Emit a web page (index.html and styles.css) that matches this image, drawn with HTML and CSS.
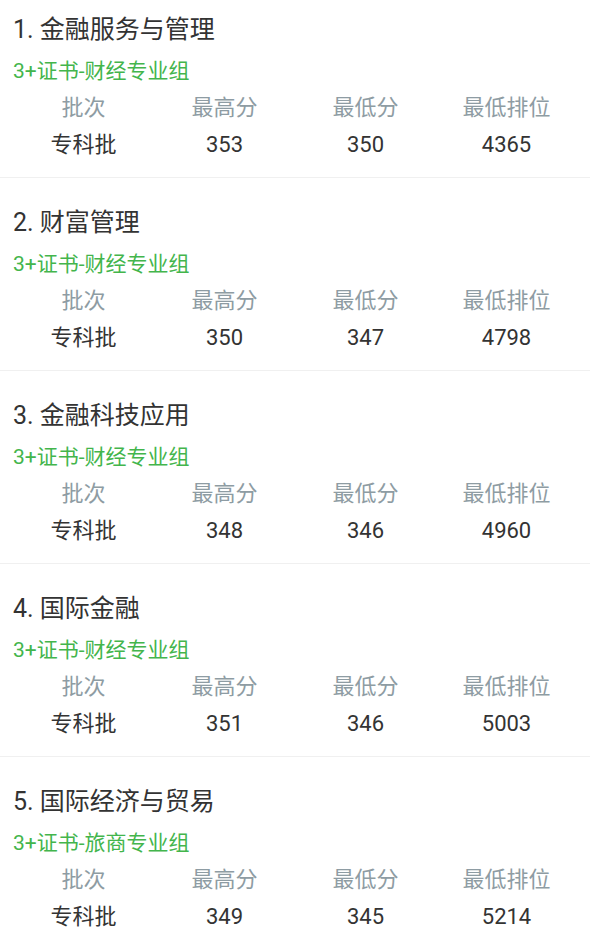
FILE: index.html
```html
<!DOCTYPE html>
<html lang="zh-CN">
<head>
<meta charset="utf-8">
<title>专业分数</title>
<link rel="stylesheet" href="styles.css">
</head>
<body>
<div class="list">
  <div class="item">
    <div class="title">1. 金融服务与管理</div>
    <div class="group">3+证书-财经专业组</div>
    <div class="table">
      <div class="th">批次</div><div class="th">最高分</div><div class="th">最低分</div><div class="th">最低排位</div>
      <div class="td">专科批</div><div class="td">353</div><div class="td">350</div><div class="td">4365</div>
    </div>
  </div>
  <div class="item">
    <div class="title">2. 财富管理</div>
    <div class="group">3+证书-财经专业组</div>
    <div class="table">
      <div class="th">批次</div><div class="th">最高分</div><div class="th">最低分</div><div class="th">最低排位</div>
      <div class="td">专科批</div><div class="td">350</div><div class="td">347</div><div class="td">4798</div>
    </div>
  </div>
  <div class="item">
    <div class="title">3. 金融科技应用</div>
    <div class="group">3+证书-财经专业组</div>
    <div class="table">
      <div class="th">批次</div><div class="th">最高分</div><div class="th">最低分</div><div class="th">最低排位</div>
      <div class="td">专科批</div><div class="td">348</div><div class="td">346</div><div class="td">4960</div>
    </div>
  </div>
  <div class="item">
    <div class="title">4. 国际金融</div>
    <div class="group">3+证书-财经专业组</div>
    <div class="table">
      <div class="th">批次</div><div class="th">最高分</div><div class="th">最低分</div><div class="th">最低排位</div>
      <div class="td">专科批</div><div class="td">351</div><div class="td">346</div><div class="td">5003</div>
    </div>
  </div>
  <div class="item">
    <div class="title">5. 国际经济与贸易</div>
    <div class="group">3+证书-旅商专业组</div>
    <div class="table">
      <div class="th">批次</div><div class="th">最高分</div><div class="th">最低分</div><div class="th">最低排位</div>
      <div class="td">专科批</div><div class="td">349</div><div class="td">345</div><div class="td">5214</div>
    </div>
  </div>
</div>
</body>
</html>
```
FILE: styles.css
```css
html, body {
  margin: 0;
  padding: 0;
  background: #ffffff;
}
body {
  font-family: Roboto, "Noto Sans CJK SC", sans-serif;
  color: #333333;
  overflow: hidden;
}
.item {
  padding: 28px 13px 14px;
  border-bottom: 1px solid #f0f0f0;
}
.item:first-child {
  padding-top: 13px;
}
.title {
  font-size: 25px;
  line-height: 34px;
  color: #333333;
}
.group {
  margin-top: 9px;
  margin-bottom: 3px;
  font-size: 21px;
  line-height: 30px;
  color: #43b54c;
}
.table {
  display: grid;
  grid-template-columns: repeat(4, 1fr);
  text-align: center;
}
.th, .td {
  font-size: 22px;
  line-height: 37px;
}
.th {
  color: #8e9ca3;
}
.td {
  color: #333333;
}
```
